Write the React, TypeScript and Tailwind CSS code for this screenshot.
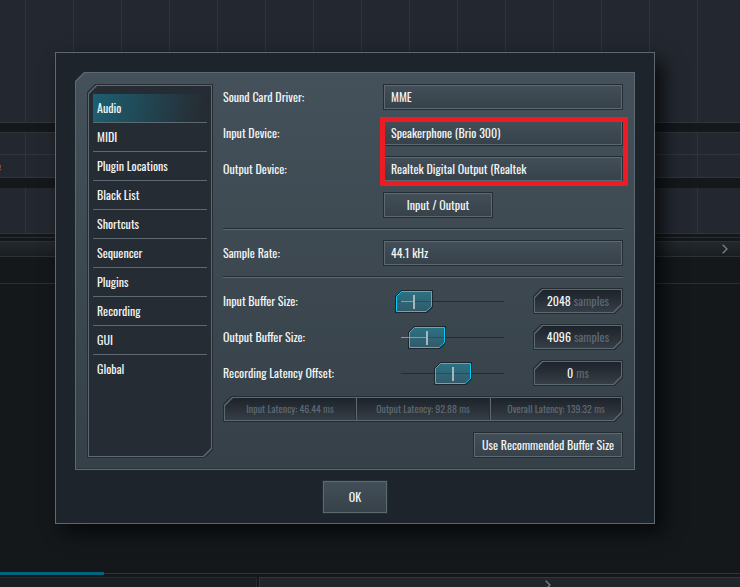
import { useState } from "react";
import type { ReactNode } from "react";

const tabs = [
  "Audio",
  "MIDI",
  "Plugin Locations",
  "Black List",
  "Shortcuts",
  "Sequencer",
  "Plugins",
  "Recording",
  "GUI",
  "Global",
];

const latencies = ["Input Latency: 46.44 ms", "Output Latency: 92.88 ms", "Overall Latency: 139.32 ms"];

const grid =
  "bg-[linear-gradient(90deg,transparent_25px,#30353c_25px,#30353c_26px,transparent_26px)] bg-[length:48px_100%]";

const cut =
  "[clip-path:polygon(8px_0,100%_0,100%_calc(100%-8px),calc(100%-8px)_100%,0_100%,0_8px)]";

const control =
  "h-[26px] border border-[#252d34] inset-ring inset-ring-[#5c6971] bg-linear-to-b from-[#434f58] to-[#36414a] text-[#f2f5f6]";

const well = "bg-linear-to-b from-[#1d232a] to-[#373e46]";

function Bevel({ fill, className = "", children }: { fill: string; className?: string; children: ReactNode }) {
  return (
    <div className={`flex bg-[#252d34] p-px ${cut} ${className}`}>
      <div className={`flex grow bg-[#5c6971] p-px ${cut}`}>
        <div className={`grow ${fill} ${cut}`}>{children}</div>
      </div>
    </div>
  );
}

function Divider() {
  return <hr className="h-0.5 border-0 border-t border-t-[#252d34] bg-[#5c6971]" />;
}

function SelectRow({ id, label, options }: { id: string; label: string; options: string[] }) {
  return (
    <div className="flex items-center">
      <label htmlFor={id} className="w-40 shrink-0">
        {label}
      </label>
      <select id={id} className={`${control} min-w-0 grow appearance-none px-[7px]`}>
        {options.map((option) => (
          <option key={option}>{option}</option>
        ))}
      </select>
    </div>
  );
}

type SliderRowProps = {
  id: string;
  label: string;
  value: number;
  onChange: (value: number) => void;
  filled?: boolean;
  reading: number;
  unit: string;
};

function SliderRow({ id, label, value, onChange, filled = true, reading, unit }: SliderRowProps) {
  const x = Math.round(18 + (value * 103) / 8);

  return (
    <div className="flex items-center">
      <label htmlFor={id} className="w-40 shrink-0">
        {label}
      </label>
      <div className="relative h-[26px] w-[140px] shrink-0">
        <svg width="140" height="26" viewBox="0 0 140 26" aria-hidden="true">
          <defs>
            <linearGradient id={`${id}-thumb`} x1="0" y1="0" x2="0" y2="1">
              <stop offset="0" stopColor="#2b7283" />
              <stop offset="1" stopColor="#33596a" />
            </linearGradient>
          </defs>
          <rect x="18" y="13" width="103" height="1" fill="#252d34" />
          <g transform={`translate(${x - 19} 2)`}>
            <path d="M6.5 0H38V17L32 23H0V6.5Z" fill="#1c262d" />
            <path d="M6.5 1.5H36.5V16.5L31 21.5H1.5V6.5Z" fill={`url(#${id}-thumb)`} stroke="#00cdf8" />
            <rect x="2" y="11" width="34" height="1" fill="#1f5160" />
          </g>
          {filled && <rect x="18" y="13" width={Math.max(0, x - 18)} height="1" fill="#00cdf8" />}
          <rect x={x - 1} y="7" width="2" height="14" fill="#a3b7bf" />
        </svg>
        <input
          id={id}
          type="range"
          min={0}
          max={8}
          value={value}
          onChange={(e) => onChange(Number(e.target.value))}
          className="absolute inset-0 w-full cursor-pointer opacity-0"
        />
      </div>
      <Bevel fill={well} className="ml-auto h-[26px] w-[90px]">
        <output htmlFor={id} className="flex h-full items-center justify-center gap-[3px]">
          <span className="text-[#f2f5f6]">{reading}</span>
          <span className="text-[#5c6873]">{unit}</span>
        </output>
      </Bevel>
    </div>
  );
}

function Chevron() {
  return (
    <svg width="6" height="10" viewBox="0 0 6 10" fill="none" stroke="#7d8285" strokeWidth="1.3" aria-hidden="true">
      <path d="M0.7 0.7L5 5L0.7 9.3" />
    </svg>
  );
}

function Workspace() {
  return (
    <div className="flex min-h-screen flex-col bg-[#14181b]">
      <div className={`h-[123px] border-b border-[#30353c] bg-[#23272f] ${grid}`} />
      <div className={`mt-[9px] h-[23px] border-y border-[#30353c] bg-[#23272f] ${grid}`} />
      <div className={`flex h-[23px] items-center border-b border-[#30353c] bg-[#23272f] ${grid}`}>
        <span className="flex w-px justify-end overflow-hidden text-[#a0694a]">e</span>
      </div>
      <div className={`mt-[10px] h-[46px] border-b border-[#30353c] bg-[#23272f] ${grid}`} />
      <div className="mt-[3px] h-px bg-[#2a2f34]" />
      <div className="mt-[3px] flex h-4 items-center justify-end border-y border-[#2c3236] bg-linear-to-b from-[#22282d] to-[#1a1e22] pr-3">
        <Chevron />
      </div>
      <div className="h-[27px] border-b border-[#2c3033]" />
      <div className="grow" />
      <div className="flex h-[3px] items-center">
        <div className="h-full w-[14%] bg-[#026680]" />
        <div className="h-px grow bg-[#303437]" />
      </div>
      <div className="mt-0.5 flex h-[10px] gap-0.5 overflow-hidden">
        <div className="w-[257px] border-t border-r border-[#24292c] bg-[#191e22]" />
        <div className="flex grow justify-center border-t border-l border-[#30353a] bg-[#22262b] pt-0.5 pl-[95px]">
          <Chevron />
        </div>
      </div>
    </div>
  );
}

export default function App() {
  const [active, setActive] = useState("Audio");
  const [inputBuffer, setInputBuffer] = useState(1);
  const [outputBuffer, setOutputBuffer] = useState(2);
  const [offset, setOffset] = useState(4);

  const resetBuffers = () => {
    setInputBuffer(1);
    setOutputBuffer(2);
    setOffset(4);
  };

  return (
    <div className="relative overflow-hidden font-['Oswald','Liberation_Sans',sans-serif] text-[12px] leading-4 text-[#f2f5f6]">
      <Workspace />

      <div className="absolute inset-x-0 top-0 pt-[52px] pr-[85px] pl-[55px]">
        <div
          role="dialog"
          aria-label="Audio"
          className="flex flex-col items-center gap-2.5 border border-[#5c6971] bg-[#1e242b] px-[19px] pt-[19px] pb-[9px] shadow-[8px_8px_18px_rgba(0,0,0,0.7)]"
        >
          <div className="w-full bg-[#5c6971] p-px [clip-path:polygon(9px_0,100%_0,100%_100%,0_100%,0_9px)]">
            <div className="flex gap-2.5 border-b border-[#2b343b] bg-linear-to-b from-[#45515a] to-[#354048] px-[11px] pt-[11px] pb-2.5 [clip-path:polygon(9px_0,100%_0,100%_100%,0_100%,0_9px)]">
              <Bevel fill="bg-[#262c33]" className="w-[126px] shrink-0">
                <nav className="flex flex-col px-1 pt-2">
                  {tabs.map((tab) => (
                    <button
                      key={tab}
                      type="button"
                      onClick={() => setActive(tab)}
                      className={`h-[29px] border-b border-[#5c6971] px-1 text-left last:border-transparent ${
                        active === tab
                          ? "bg-[linear-gradient(100deg,#1b6072,#224450_50%,#262c33_95%)]"
                          : ""
                      }`}
                    >
                      {tab}
                    </button>
                  ))}
                </nav>
              </Bevel>

              <form className="flex min-w-0 grow flex-col gap-2.5" onSubmit={(e) => e.preventDefault()}>
                <SelectRow id="driver" label="Sound Card Driver:" options={["MME"]} />
                <div className="relative flex flex-col gap-2.5">
                  <SelectRow id="input-device" label="Input Device:" options={["Speakerphone (Brio 300)"]} />
                  <SelectRow id="output-device" label="Output Device:" options={["Realtek Digital Output (Realtek"]} />
                  <div className="pointer-events-none absolute -top-[3px] -right-[5px] -bottom-1 left-[157px] border-5 border-[#ed1c24]" />
                </div>
                <button type="button" className={`${control} ml-40 w-[110px]`}>
                  Input / Output
                </button>
                <Divider />
                <SelectRow id="sample-rate" label="Sample Rate:" options={["44.1 kHz"]} />
                <Divider />
                <SliderRow
                  id="input-buffer"
                  label="Input Buffer Size:"
                  value={inputBuffer}
                  onChange={setInputBuffer}
                  reading={1024 * 2 ** inputBuffer}
                  unit="samples"
                />
                <SliderRow
                  id="output-buffer"
                  label="Output Buffer Size:"
                  value={outputBuffer}
                  onChange={setOutputBuffer}
                  reading={1024 * 2 ** outputBuffer}
                  unit="samples"
                />
                <SliderRow
                  id="latency-offset"
                  label="Recording Latency Offset:"
                  value={offset}
                  onChange={setOffset}
                  filled={false}
                  reading={(offset - 4) * 10}
                  unit="ms"
                />
                <Bevel fill={well} className="h-[26px]">
                  <div className="grid h-full grid-cols-[131fr_134fr_131fr] text-[10px] text-[#5c6873]">
                    {latencies.map((latency) => (
                      <div
                        key={latency}
                        className="flex items-center justify-center border-r border-l border-r-[#252d34] border-l-[#5c6971] whitespace-nowrap first:border-l-0 last:border-r-0"
                      >
                        {latency}
                      </div>
                    ))}
                  </div>
                </Bevel>
                <button type="button" onClick={resetBuffers} className={`${control} w-[150px] self-end whitespace-nowrap`}>
                  Use Recommended Buffer Size
                </button>
              </form>
            </div>
          </div>

          <button
            type="button"
            className="h-[34px] w-[66px] border border-[#252d34] bg-linear-to-b from-[#434f58] to-[#36414a] inset-ring inset-ring-[#5c6971]"
          >
            OK
          </button>
        </div>
      </div>
    </div>
  );
}
